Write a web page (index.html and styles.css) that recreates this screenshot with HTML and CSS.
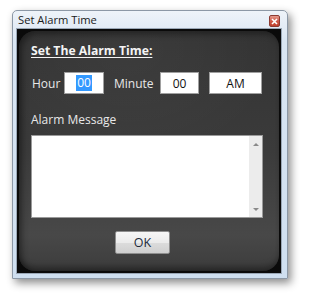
FILE: index.html
```html
<!DOCTYPE html>
<html>
<head>
<meta charset="utf-8">
<link rel="stylesheet" href="styles.css">
</head>
<body>
<div class="window">
  <div class="titlebar">
    <span class="title">Set Alarm Time</span>
    <span class="close"><svg width="7" height="7" viewBox="0 0 7 7"><path d="M1 1L6 6M6 1L1 6" stroke="#fff" stroke-width="1.6"/></svg></span>
  </div>
  <div class="client">
    <div class="panel">
      <div class="heading">Set The Alarm Time:</div>
      <div class="row">
        <span class="label lab-hour">Hour</span>
        <span class="box box-hour"><span class="sel">00</span></span>
        <span class="label lab-min">Minute</span>
        <span class="box box-min">00</span>
        <span class="box box-ampm">AM</span>
      </div>
      <div class="msg-label">Alarm Message</div>
      <div class="textarea">
        <div class="text"></div>
        <div class="scroll">
          <span class="arrow up"></span>
          <span class="arrow down"></span>
        </div>
      </div>
      <div class="btnrow"><span class="ok">OK</span></div>
    </div>
  </div>
</div>
</body>
</html>
```
FILE: styles.css
```css
html, body { margin: 0; padding: 0; background: #ffffff; }
body { width: 300px; height: 295px; overflow: hidden; font-family: "Open Sans", "Noto Sans", sans-serif; }

.window {
  margin: 10px 0 0 12px;
  width: 276px;
  height: 269px;
  box-sizing: border-box;
  border: 1px solid #8c98a6;
  border-radius: 5px 5px 0 0;
  background: linear-gradient(#eef3f9, #d9e5f2 30px, #cfdff0);
  box-shadow: 3px 4px 9px rgba(0,0,0,0.45);
  display: flex;
  flex-direction: column;
}
.titlebar {
  height: 17px;
  display: flex;
  align-items: center;
  justify-content: space-between;
  padding: 0 7px 0 5px;
}
.title { font-size: 11.2px; color: #1a1a1a; line-height: 12px; margin-top: 1px; }
.close {
  width: 11px; height: 12px;
  margin-top: 3px;
  box-sizing: border-box;
  border: 1px solid #8b3b32;
  border-radius: 2px;
  background: linear-gradient(#e49a8e, #cf5a48 50%, #c0412e);
  display: flex; align-items: center; justify-content: center;
}
.client {
  flex: 1;
  margin: 0 5px 4px 3px;
  border: 1px solid #9aa7b6;
  background: #0a0a0a;
  padding: 2px;
  display: flex;
}
.panel {
  flex: 1;
  border-radius: 16px;
  background:
    radial-gradient(ellipse 150px 110px at 110px 20px, rgba(255,255,255,0.035), rgba(255,255,255,0) 100%),
    linear-gradient(#333333, #3b3b3b 50%, #484848 85%, #3c3c3c);
  box-shadow: inset 0 -8px 6px -4px rgba(0,0,0,0.35), inset 3px 3px 6px rgba(0,0,0,0.4);
  padding: 10px 0 0 12px;
  color: #f0f0f0;
}
.heading {
  font-weight: 700;
  font-size: 12.2px;
  line-height: 19px;
  text-decoration: underline;
  text-underline-offset: 2px;
  color: #f4f4f4;
}
.row {
  margin-top: 12px;
  display: flex;
  align-items: center;
  height: 22px;
}
.label { font-size: 12px; color: #e8e8e8; line-height: 17px; }
.lab-hour { width: 33px; margin-left: 1px; }
.lab-min { width: 46px; margin-left: 10px; }
.box {
  height: 22px;
  box-sizing: border-box;
  background: #ffffff;
  border: 1px solid #a0a0a0;
  color: #111;
  font-size: 12px;
  display: flex; align-items: center; justify-content: center;
}
.box-hour { width: 40px; margin-left: -1px; }
.box-min { width: 39px; }
.box-ampm { width: 53px; margin-left: 10px; }
.sel { background: #3399ff; color: #ffffff; line-height: 16px; padding: 0 1px; }
.msg-label { margin-top: 17px; font-size: 12px; line-height: 17px; color: #e8e8e8; }
.textarea {
  margin-top: 7px;
  width: 232px;
  height: 83px;
  box-sizing: border-box;
  background: #ffffff;
  border: 1px solid #9a9a9a;
  display: flex;
}
.text { flex: 1; }
.scroll {
  width: 13px;
  background: #ececec;
  display: flex;
  flex-direction: column;
  justify-content: space-between;
  align-items: center;
  padding: 7px 0 6px;
}
.arrow { width: 0; height: 0; border-left: 3px solid transparent; border-right: 3px solid transparent; }
.up { border-bottom: 3px solid #8a8a8a; }
.down { border-top: 3px solid #8a8a8a; }
.btnrow { margin-top: 13px; padding-left: 84px; display: flex; }
.ok {
  width: 55px; height: 23px;
  box-sizing: border-box;
  border: 1px solid #8e8e8e;
  border-radius: 2px;
  background: linear-gradient(#f6f6f6, #ebebeb 50%, #dcdcdc 51%, #cfcfcf);
  color: #1c2a3a;
  font-size: 12.5px;
  display: flex; align-items: center; justify-content: center;
}
```
